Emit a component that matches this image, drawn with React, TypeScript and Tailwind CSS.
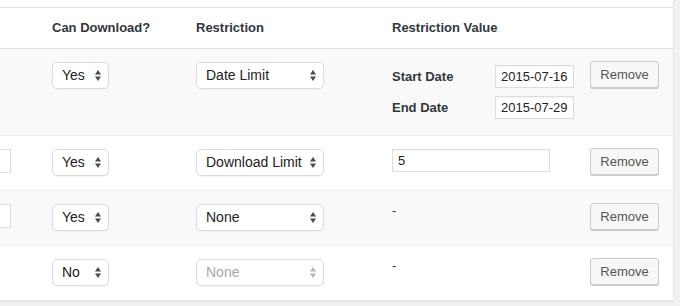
import React from "react";

const cols = "grid grid-cols-[52px_144px_196px_198px_1fr]";

function Arrows({ disabled }: { disabled?: boolean }) {
  return (
    <svg width="6" height="11" viewBox="0 0 6 11" className="shrink-0" aria-hidden>
      <path d="M3 0 L6 4.5 L0 4.5 Z" fill={disabled ? "#b4b4b4" : "#4a4a4a"} />
      <path d="M0 6.5 L6 6.5 L3 11 Z" fill={disabled ? "#b4b4b4" : "#4a4a4a"} />
    </svg>
  );
}

function Select({ value, width, disabled }: { value: string; width: string; disabled?: boolean }) {
  return (
    <div
      className={`flex h-[27px] items-center justify-between rounded-[5px] border border-[#dcdcdc] bg-white pl-[9px] pr-[7px] text-[14px] shadow-[0_1px_1px_rgba(0,0,0,0.04)] ${width} ${
        disabled ? "text-[#a8a8a8]" : "text-[#222]"
      }`}
    >
      <span>{value}</span>
      <Arrows disabled={disabled} />
    </div>
  );
}

function TextBox({ value, width }: { value: string; width: string }) {
  return (
    <div
      className={`flex h-[23px] items-center border border-[#dddddd] bg-white px-[5px] text-[13px] text-[#222] shadow-[inset_0_1px_2px_rgba(0,0,0,0.05)] ${width}`}
    >
      {value}
    </div>
  );
}

function RemoveButton() {
  return (
    <button className="h-[27px] w-[69px] rounded-[3px] border border-[#cccccc] bg-[#f7f7f7] text-[13px] text-[#555] shadow-[0_1px_0_#cccccc]">
      Remove
    </button>
  );
}

function Stub() {
  return <div className="mt-[13px] h-[24px] w-[11px] border border-l-0 border-[#dddddd] bg-white" />;
}

type RowProps = {
  striped?: boolean;
  stub?: boolean;
  can: string;
  restriction: string;
  disabled?: boolean;
  value: React.ReactNode;
  height: string;
  last?: boolean;
};

function Row({ striped, stub, can, restriction, disabled, value, height, last }: RowProps) {
  return (
    <div
      className={`${cols} items-start ${height} ${striped ? "bg-[#f9f9f9]" : "bg-white"} ${
        last ? "" : "border-b border-[#f0f0f0]"
      }`}
    >
      <div>{stub && <Stub />}</div>
      <div className="pt-[13px]">
        <Select value={can} width="w-[57px]" />
      </div>
      <div className="pt-[13px]">
        <Select value={restriction} width="w-[128px]" disabled={disabled} />
      </div>
      <div>{value}</div>
      <div className="pt-[12px]">
        <RemoveButton />
      </div>
    </div>
  );
}

function Dash() {
  return <div className="pt-[10px] text-[13px] leading-[20px] text-[#333]">-</div>;
}

export default function App() {
  return (
    <div className="h-[306px] w-[680px] overflow-hidden bg-[#f1f1f1] font-['Liberation_Sans',Arial,sans-serif]">
      <div className="w-[674px] border-r border-b border-[#e5e5e5] bg-white shadow-[0_1px_1px_rgba(0,0,0,0.04)]">
        <div className="h-[8px] border-b border-[#e1e1e1] bg-white" />
        <div className={`${cols} h-[41px] items-center border-b border-[#e1e1e1] text-[13px] font-bold text-[#32373c]`}>
          <div />
          <div>Can Download?</div>
          <div>Restriction</div>
          <div>Restriction Value</div>
          <div />
        </div>
        <Row
          striped
          can="Yes"
          restriction="Date Limit"
          height="h-[87px]"
          value={
            <div className="flex flex-col gap-[8px] pt-[16px]">
              <div className="flex items-center">
                <span className="w-[103px] text-[13px] font-bold text-[#32373c]">Start Date</span>
                <TextBox value="2015-07-16" width="w-[79px]" />
              </div>
              <div className="flex items-center">
                <span className="w-[103px] text-[13px] font-bold text-[#32373c]">End Date</span>
                <TextBox value="2015-07-29" width="w-[79px]" />
              </div>
            </div>
          }
        />
        <Row
          stub
          can="Yes"
          restriction="Download Limit"
          height="h-[55px]"
          value={
            <div className="pt-[13px]">
              <TextBox value="5" width="w-[158px]" />
            </div>
          }
        />
        <Row striped stub can="Yes" restriction="None" height="h-[55px]" value={<Dash />} />
        <Row can="No" restriction="None" disabled height="h-[54px]" value={<Dash />} last />
      </div>
    </div>
  );
}
